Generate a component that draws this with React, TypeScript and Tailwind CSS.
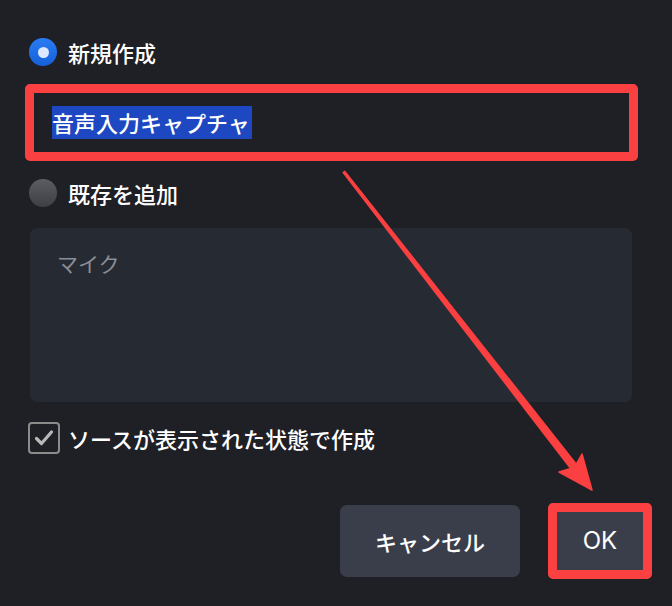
export default function App() {
  return (
    <div
      className="relative w-[672px] h-[606px] overflow-hidden bg-[#1f2026] text-white font-medium"
      style={{ fontFamily: '"Noto Sans CJK JP", "Noto Sans", sans-serif' }}
    >
      <div className="flex flex-col px-[25px]">
        {/* 新規作成 */}
        <div className="mt-[38px] flex h-[28px] items-center gap-[11px] pl-[4px]">
          <span className="flex h-[28px] w-[28px] items-center justify-center rounded-full bg-gradient-to-b from-[#2a7cf4] to-[#1560d8]">
            <span className="h-[11px] w-[11px] rounded-full bg-[#dce8ff]" />
          </span>
          <span className="text-[22px] leading-[28px]">新規作成</span>
        </div>

        {/* name input */}
        <div className="mt-[18px] flex h-[77px] w-[613px] items-center rounded-[5px] border-[9px] border-[#fa4040] bg-[#1f2026] pl-[18px]">
          <span className="bg-[#1d48c2] pr-[2px] text-[22px] leading-[33px]">音声入力キャプチャ</span>
        </div>

        {/* 既存を追加 */}
        <div className="mt-[18px] flex h-[28px] items-center gap-[11px] pl-[4px]">
          <span className="h-[28px] w-[28px] rounded-full bg-gradient-to-b from-[#5c5d62] to-[#3e3f44]" />
          <span className="text-[22px] leading-[28px]">既存を追加</span>
        </div>

        {/* source list */}
        <div className="mt-[21px] ml-[5px] h-[174px] w-[602px] rounded-[7px] bg-[#262a33] pl-[27px] pt-[20px]">
          <span className="text-[21px] font-normal leading-[30px] text-[#8b8e95]">マイク</span>
        </div>

        {/* visible checkbox */}
        <div className="mt-[20px] ml-[3px] flex h-[32px] items-center gap-[8px]">
          <span className="flex h-[32px] w-[32px] items-center justify-center rounded-[4px] border-2 border-[#8c8c8c]">
            <svg width="22" height="22" viewBox="0 0 22 22" fill="none">
              <path d="M3.5 11.5 L8.5 16.5 L18.5 5" stroke="#b8b8b8" strokeWidth="3.2" strokeLinecap="round" strokeLinejoin="round" />
            </svg>
          </span>
          <span className="text-[22px] leading-[32px]">ソースが表示された状態で作成</span>
        </div>

        {/* buttons */}
        <div className="mt-[49px] mr-[-5px] flex items-center justify-end gap-[28px]">
          <button className="h-[72px] w-[180px] rounded-[7px] bg-[#3a3e4a] text-[22px]">キャンセル</button>
          <button
            className="h-[76px] w-[104px] rounded-[5px] border-[9px] border-[#fa4040] bg-[#3a3e4a] text-[24px] font-normal"
            style={{ fontFamily: '"Inter", "Noto Sans", sans-serif' }}
          >
            OK
          </button>
        </div>
      </div>

      {/* annotation arrow */}
      <svg className="pointer-events-none absolute inset-0" width="672" height="606" viewBox="0 0 672 606">
        <polygon
          points="343.2,172.6 344.8,171.4 576.3,464.2 582,454 592,490 559,472 570.7,468.5"
          fill="#fa4040"
          stroke="#fa4040"
          strokeWidth="1.5"
          strokeLinejoin="round"
        />
      </svg>
    </div>
  );
}
